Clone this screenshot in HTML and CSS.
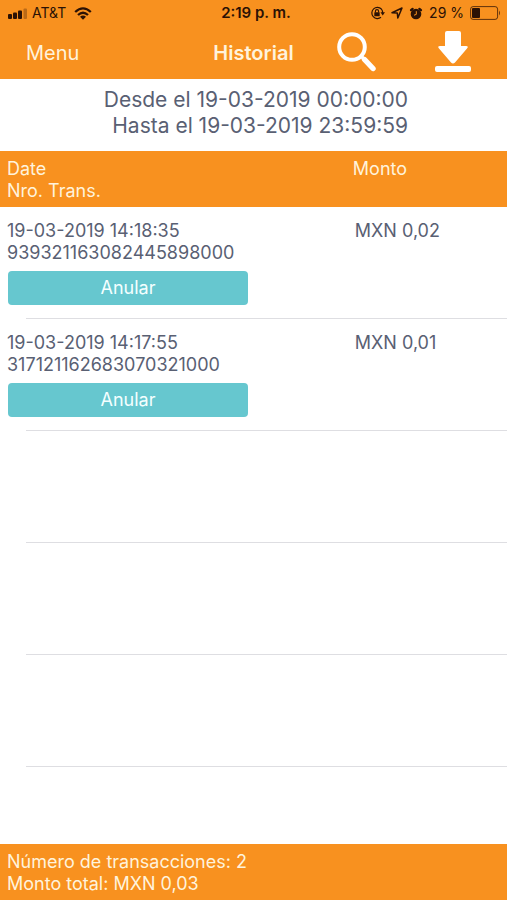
FILE: index.html
```html
<!DOCTYPE html>
<html lang="es">
<head>
<meta charset="utf-8">
<meta name="viewport" content="width=device-width, initial-scale=1">
<title>Historial</title>
<link rel="stylesheet" href="styles.css">
</head>
<body>
<div class="app">
  <header class="top">
    <div class="status">
      <div class="status-side">
        <svg class="signal" width="20" height="12" viewBox="0 0 20 12" aria-hidden="true">
          <rect x="0" y="7" width="4" height="5" rx="1"/>
          <rect x="5" y="5.5" width="4" height="6.5" rx="1"/>
          <rect x="10" y="3.5" width="4" height="8.5" rx="1"/>
          <rect x="15.5" y="1.5" width="3.5" height="10.5" rx="1" opacity=".3"/>
        </svg>
        <span class="carrier">AT&amp;T</span>
        <svg class="wifi" width="18" height="13" viewBox="0 0 18 13" aria-hidden="true">
          <path d="M1.2 5Q9-2.2 16.8 5M4 8Q9 3.4 14 8" fill="none" stroke="currentColor" stroke-width="2.3"/>
          <path d="M6 9.7Q9 7.2 12 9.7L9 12.8Z"/>
        </svg>
      </div>
      <span class="clock">2:19 p. m.</span>
      <div class="status-side status-right">
        <svg width="15" height="14" viewBox="0 0 15 14" aria-hidden="true">
          <path d="M11.4 3A5.6 5.6 0 1 0 11 11.3M11.4 3A5.6 5.6 0 0 1 12.6 7" fill="none" stroke="currentColor" stroke-width="1.2"/>
          <path d="M10.5 6.3H15L12.7 9.4Z"/>
          <rect x="4.3" y="6.3" width="5.4" height="4" rx=".5"/>
          <path d="M5.4 6.5V5.2a1.6 1.6 0 0 1 3.2 0V6.5" fill="none" stroke="currentColor" stroke-width="1.1"/>
        </svg>
        <svg width="12" height="12" viewBox="0 0 12 12" aria-hidden="true">
          <path d="M1 5.8L11 1L6.8 11L6.3 6Z" fill="none" stroke="currentColor" stroke-width="1.5" stroke-linejoin="round"/>
        </svg>
        <svg width="14" height="13" viewBox="0 0 14 13" aria-hidden="true">
          <circle cx="7" cy="7" r="5.3"/>
          <path d="M2 3.2L3.6 1.8M12 3.2L10.4 1.8" fill="none" stroke="currentColor" stroke-width="2.2" stroke-linecap="round"/>
          <path d="M7.3 4.2V7.4L5 8.2" fill="none" stroke="#f8911f" stroke-width="1"/>
        </svg>
        <span class="percent">29 %</span>
        <svg width="31" height="14" viewBox="0 0 31 14" aria-hidden="true">
          <rect x=".6" y=".6" width="27" height="12.8" rx="2.5" fill="none" stroke="currentColor" stroke-width="1" opacity=".75"/>
          <rect x="2" y="2" width="8" height="10" rx="1"/>
          <path d="M29 4.5Q31 7 29 9.5Z" opacity=".7"/>
        </svg>
      </div>
    </div>
    <nav class="bar">
      <a class="menu" href="#menu">Menu</a>
      <h1>Historial</h1>
      <div class="actions">
        <button class="icon" type="button" aria-label="Buscar">
          <svg width="40" height="42" viewBox="0 0 40 42" aria-hidden="true">
            <circle cx="15" cy="15" r="12.8" fill="none" stroke="currentColor" stroke-width="4"/>
            <path d="M24 24L28 28" stroke="currentColor" stroke-width="3.4"/>
            <path d="M27.5 27.5L36 36.5" stroke="currentColor" stroke-width="5.4" stroke-linecap="round"/>
          </svg>
        </button>
        <button class="icon" type="button" aria-label="Descargar">
          <svg width="36" height="44" viewBox="0 0 36 44" aria-hidden="true">
            <path d="M12 0H24Q26 0 26 2V15H31Q34 15 32 17.5L20 31.5Q18 33.5 16 31.5L4 17.5Q2 15 5 15H10V2Q10 0 12 0Z"/>
            <rect x="0" y="35" width="36" height="6" rx="2"/>
          </svg>
        </button>
      </div>
    </nav>
  </header>

  <div class="range">
    <p>Desde el 19-03-2019 00:00:00</p>
    <p>Hasta el 19-03-2019 23:59:59</p>
  </div>

  <main class="list">
    <table>
      <thead>
        <tr><th scope="col">Date<br>Nro. Trans.</th><th class="amount" scope="col">Monto</th></tr>
      </thead>
      <tbody>
        <tr>
          <td>19-03-2019 14:18:35<br>939321163082445898000<button class="void" type="button">Anular</button></td>
          <td class="amount">MXN 0,02</td>
        </tr>
        <tr>
          <td>19-03-2019 14:17:55<br>317121162683070321000<button class="void" type="button">Anular</button></td>
          <td class="amount">MXN 0,01</td>
        </tr>
        <tr><td></td><td></td></tr>
        <tr><td></td><td></td></tr>
        <tr><td></td><td></td></tr>
      </tbody>
    </table>
  </main>

  <footer class="totals">
    <p>Número de transacciones: 2</p>
    <p>Monto total: MXN 0,03</p>
  </footer>
</div>
</body>
</html>
```
FILE: styles.css
```css
* {
  box-sizing: border-box;
}

body {
  margin: 0;
  background: #fff;
  color: #596073;
  font-family: Inter, "Liberation Sans", sans-serif;
  font-size: 18px;
  line-height: 22px;
}

p,
h1 {
  margin: 0;
}

svg {
  display: block;
  flex: none;
  fill: currentColor;
}

.app {
  display: flex;
  flex-direction: column;
  min-height: 100vh;
}

.top,
.totals,
thead {
  background: #f8911f;
  color: #fff3dc;
}

.status {
  display: grid;
  grid-template-columns: 1fr auto 1fr;
  align-items: center;
  height: 26px;
  padding: 0 6px 0 8px;
  color: #2b1205;
  font-size: 14px;
}

.status-side {
  display: flex;
  align-items: center;
  gap: 4px;
}

.wifi {
  margin-left: 4px;
}

.status-right {
  justify-content: flex-end;
  gap: 6px;
}

.clock {
  padding-left: 3px;
  font-size: 15px;
  font-weight: 600;
}

.bar {
  display: grid;
  grid-template-columns: 1fr auto 1fr;
  align-items: center;
  height: 53px;
  padding: 0 36px 0 26px;
}

.menu {
  color: inherit;
  font-size: 20px;
  text-decoration: none;
}

h1 {
  padding-left: 10px;
  font-size: 20px;
  font-weight: 600;
}

.actions {
  display: flex;
  align-items: center;
  justify-content: space-between;
  padding-left: 43px;
}

.icon {
  padding: 0;
  border: 0;
  background: none;
  color: #fff;
}

.range {
  height: 72px;
  padding: 8px 99px 0 0;
  font-size: 21px;
  line-height: 26px;
  text-align: right;
}

.list {
  flex: 1;
}

table {
  width: 100%;
  border-collapse: collapse;
  table-layout: fixed;
}

th,
td {
  padding: 13px 0 0 7px;
  font-weight: 400;
  text-align: left;
  vertical-align: top;
}

th {
  width: 69%;
  height: 56px;
  padding-top: 7px;
}

th.amount {
  width: 31%;
  padding-left: 3px;
}

td.amount {
  padding-left: 5px;
}

tbody tr {
  height: 112px;
  background: linear-gradient(#dedee2, #dedee2) 26px 100% / 100% 1px no-repeat;
}

.void {
  display: block;
  width: 70%;
  height: 34px;
  margin: 7px 0 0 1px;
  padding: 0;
  border: 0;
  border-radius: 4px;
  background: #66c7cf;
  color: #f4ffff;
  font: inherit;
}

.totals {
  height: 56px;
  padding: 7px;
}
```
